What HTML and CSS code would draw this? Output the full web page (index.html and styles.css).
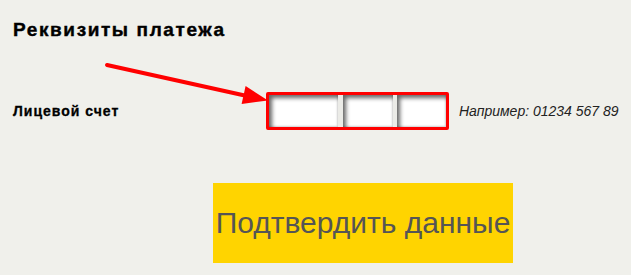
FILE: index.html
```html
<!DOCTYPE html>
<html lang="ru">
<head>
<meta charset="utf-8">
<title>Реквизиты платежа</title>
<link rel="stylesheet" href="styles.css">
</head>
<body>
<div class="page">
  <h1 class="title">Реквизиты платежа</h1>
  <div class="row">
    <label class="label">Лицевой счет</label>
    <div class="inputs">
      <input class="field field-a" type="text">
      <input class="field field-b" type="text">
      <input class="field field-c" type="text">
    </div>
    <span class="hint">Например: 01234 567 89</span>
  </div>
  <button class="submit" type="button">Подтвердить данные</button>
  <svg class="arrow" width="631" height="275" viewBox="0 0 631 275" aria-hidden="true">
    <line x1="107" y1="65" x2="247" y2="96" stroke="#ff0000" stroke-width="4" stroke-linecap="round"/>
    <polygon points="268,100.5 245.6,86 241.6,104" fill="#ff0000"/>
  </svg>
</div>
</body>
</html>
```
FILE: styles.css
```css
html, body {
  margin: 0;
  padding: 0;
  background: #f0f0eb;
}
body {
  font-family: "Liberation Sans", Arial, sans-serif;
  color: #000;
}
.page {
  position: relative;
  width: 631px;
  height: 275px;
  box-sizing: border-box;
  padding: 19px 0 0 13px;
  overflow: hidden;
}
.title {
  margin: 0;
  font-size: 19px;
  font-weight: bold;
  line-height: 21px;
  letter-spacing: 1.6px;
  -webkit-text-stroke: 0.4px #000;
}
.row {
  display: flex;
  align-items: center;
  margin-top: 52px;
  height: 38px;
}
.label {
  width: 253px;
  font-size: 14px;
  font-weight: bold;
  letter-spacing: 1px;
  -webkit-text-stroke: 0.3px #000;
}
.inputs {
  display: flex;
  gap: 4px;
  border: 3px solid #ff0000;
  border-radius: 2px;
  background: #ebebe7;
  width: 177px;
  height: 32px;
}
.field {
  margin: 0;
  border: 0;
  padding: 0;
  height: 32px;
  background: #fff;
  box-shadow: inset 3px 3px 4px rgba(0,0,0,0.6), inset -1px -1px 2px rgba(0,0,0,0.15);
  outline: none;
}
.field-a { width: 69px; margin-right: 1px; }
.field-b { width: 50px; }
.field-c { width: 49px; }
.hint {
  margin-left: 10px;
  font-size: 14px;
  font-style: italic;
  color: #222;
}
.submit {
  display: block;
  margin: 53px 0 0 200px;
  width: 300px;
  height: 80px;
  padding: 0;
  border: 0;
  background: #ffd400;
  color: #555;
  font-family: "Liberation Sans", Arial, sans-serif;
  font-size: 30px;
  white-space: nowrap;
  overflow: visible;
}
.arrow {
  position: absolute;
  left: 0;
  top: 0;
  pointer-events: none;
}
```
